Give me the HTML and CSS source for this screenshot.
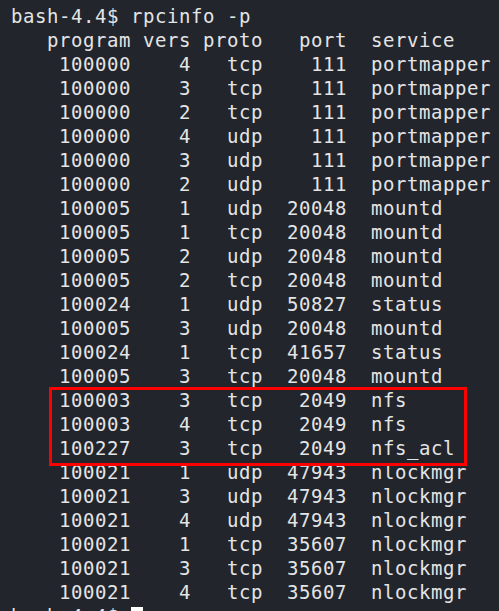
FILE: index.html
```html
<!DOCTYPE html>
<html>
<head>
<meta charset="utf-8">
<link rel="stylesheet" href="styles.css">
</head>
<body>
<main class="term">
<div class="line">bash-4.4$ rpcinfo -p</div>
<div class="line">   program vers proto   port  service</div>
<div class="line">    100000    4   tcp    111  portmapper</div>
<div class="line">    100000    3   tcp    111  portmapper</div>
<div class="line">    100000    2   tcp    111  portmapper</div>
<div class="line">    100000    4   udp    111  portmapper</div>
<div class="line">    100000    3   udp    111  portmapper</div>
<div class="line">    100000    2   udp    111  portmapper</div>
<div class="line">    100005    1   udp  20048  mountd</div>
<div class="line">    100005    1   tcp  20048  mountd</div>
<div class="line">    100005    2   udp  20048  mountd</div>
<div class="line">    100005    2   tcp  20048  mountd</div>
<div class="line">    100024    1   udp  50827  status</div>
<div class="line">    100005    3   udp  20048  mountd</div>
<div class="line">    100024    1   tcp  41657  status</div>
<div class="line">    100005    3   tcp  20048  mountd</div>
<div class="hl">
<div class="line">    100003    3   tcp   2049  nfs</div>
<div class="line">    100003    4   tcp   2049  nfs</div>
<div class="line">    100227    3   tcp   2049  nfs_acl</div>
</div>
<div class="line">    100021    1   udp  47943  nlockmgr</div>
<div class="line">    100021    3   udp  47943  nlockmgr</div>
<div class="line">    100021    4   udp  47943  nlockmgr</div>
<div class="line">    100021    1   tcp  35607  nlockmgr</div>
<div class="line">    100021    3   tcp  35607  nlockmgr</div>
<div class="line">    100021    4   tcp  35607  nlockmgr</div>
<div class="line">bash-4.4$ <span class="cursor"></span></div>
</main>
</body>
</html>
```
FILE: styles.css
```css
html, body {
  margin: 0;
  padding: 0;
  background: #22252c;
  overflow: hidden;
}
.term {
  width: 499px;
  height: 611px;
  box-sizing: border-box;
  padding: 4px 0 0 11px;
  background: #22252c;
  color: #e4e4e4;
  font-family: "DejaVu Sans Mono", monospace;
  font-size: 19px;
  letter-spacing: 0.56px;
  overflow: hidden;
}
.line {
  height: 24px;
  line-height: 24px;
  white-space: pre;
}
.hl {
  position: relative;
}
.hl::after {
  content: "";
  position: absolute;
  left: 38px;
  top: -1px;
  width: 412px;
  height: 73px;
  border: 3px solid #ff0000;
}
.cursor {
  display: inline-block;
  width: 12px;
  height: 20px;
  background: #ffffff;
  vertical-align: -4px;
}
```
